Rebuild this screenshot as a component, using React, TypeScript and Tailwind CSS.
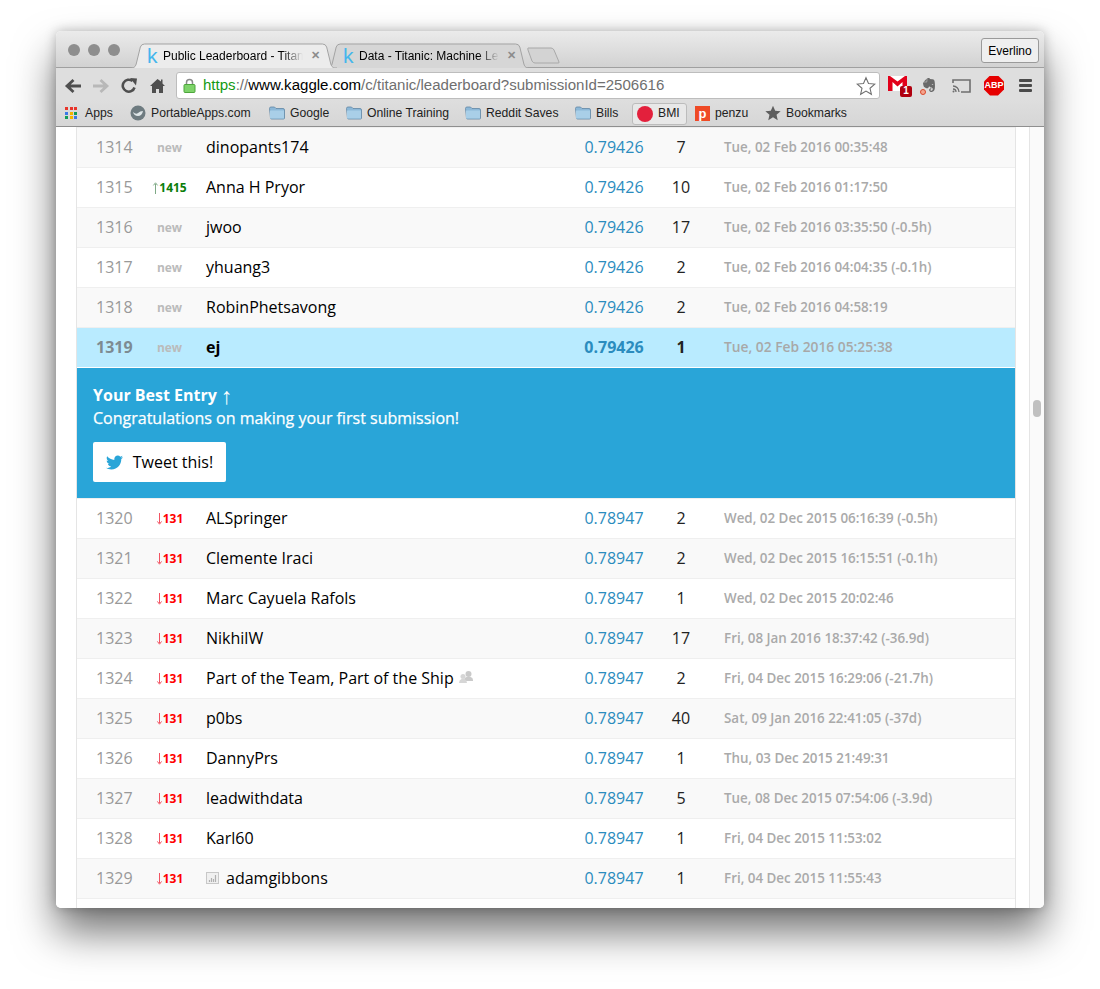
import React from 'react';
import { FaTwitter, FaEvernote } from 'react-icons/fa';

type Row = {
  rank: number;
  change: 'new' | 'up' | 'down';
  delta?: string;
  name: string;
  score: string;
  entries: number;
  date: string;
  team?: boolean;
  chart?: boolean;
};

const topRows: Row[] = [
  { rank: 1314, change: 'new', name: 'dinopants174', score: '0.79426', entries: 7, date: 'Tue, 02 Feb 2016 00:35:48' },
  { rank: 1315, change: 'up', delta: '1415', name: 'Anna H Pryor', score: '0.79426', entries: 10, date: 'Tue, 02 Feb 2016 01:17:50' },
  { rank: 1316, change: 'new', name: 'jwoo', score: '0.79426', entries: 17, date: 'Tue, 02 Feb 2016 03:35:50 (-0.5h)' },
  { rank: 1317, change: 'new', name: 'yhuang3', score: '0.79426', entries: 2, date: 'Tue, 02 Feb 2016 04:04:35 (-0.1h)' },
  { rank: 1318, change: 'new', name: 'RobinPhetsavong', score: '0.79426', entries: 2, date: 'Tue, 02 Feb 2016 04:58:19' },
];

const bottomRows: Row[] = [
  { rank: 1320, change: 'down', delta: '131', name: 'ALSpringer', score: '0.78947', entries: 2, date: 'Wed, 02 Dec 2015 06:16:39 (-0.5h)' },
  { rank: 1321, change: 'down', delta: '131', name: 'Clemente Iraci', score: '0.78947', entries: 2, date: 'Wed, 02 Dec 2015 16:15:51 (-0.1h)' },
  { rank: 1322, change: 'down', delta: '131', name: 'Marc Cayuela Rafols', score: '0.78947', entries: 1, date: 'Wed, 02 Dec 2015 20:02:46' },
  { rank: 1323, change: 'down', delta: '131', name: 'NikhilW', score: '0.78947', entries: 17, date: 'Fri, 08 Jan 2016 18:37:42 (-36.9d)' },
  { rank: 1324, change: 'down', delta: '131', name: 'Part of the Team, Part of the Ship', team: true, score: '0.78947', entries: 2, date: 'Fri, 04 Dec 2015 16:29:06 (-21.7h)' },
  { rank: 1325, change: 'down', delta: '131', name: 'p0bs', score: '0.78947', entries: 40, date: 'Sat, 09 Jan 2016 22:41:05 (-37d)' },
  { rank: 1326, change: 'down', delta: '131', name: 'DannyPrs', score: '0.78947', entries: 1, date: 'Thu, 03 Dec 2015 21:49:31' },
  { rank: 1327, change: 'down', delta: '131', name: 'leadwithdata', score: '0.78947', entries: 5, date: 'Tue, 08 Dec 2015 07:54:06 (-3.9d)' },
  { rank: 1328, change: 'down', delta: '131', name: 'Karl60', score: '0.78947', entries: 1, date: 'Fri, 04 Dec 2015 11:53:02' },
  { rank: 1329, change: 'down', delta: '131', name: 'adamgibbons', chart: true, score: '0.78947', entries: 1, date: 'Fri, 04 Dec 2015 11:55:43' },
];

const Change = ({ row }: { row: Row }) => {
  if (row.change === 'new') {
    return <div className="mt-[2px] pl-[1px] text-center text-[12px] font-bold text-[#bbbbbb]">new</div>;
  }
  const up = row.change === 'up';
  return (
    <div className={`mt-[2px] flex items-center justify-center whitespace-nowrap pl-[1px] text-[12px] font-bold ${up ? 'text-[#0a7d0a]' : 'text-[#ff0000]'}`}>
      <svg width="7" height="12" viewBox="0 0 7 12" className="mt-[1px]" fill="none" stroke={up ? '#6f9f78' : '#f04050'} strokeWidth="0.9">
        {up ? <path d="M3.5 12V2M1.4 3.4 3.5 .8l2.1 2.6" /> : <path d="M3.5 0v10M1.4 8.4l2.1 2.8 2.1-2.8" />}
      </svg>
      {row.delta}
    </div>
  );
};

const ChartIcon = () => (
  <svg width="13" height="12" viewBox="0 0 13 12" className="mr-[7px] shrink-0" fill="none">
    <rect x="0.5" y="0.5" width="12" height="11" fill="#f0f0f0" stroke="#c8c8c8" />
    <path d="M3.500 10V8M5.500 10V6M7.500 10V7M9.500 10V3" stroke="#b0b0b0" strokeWidth="1.200" />
  </svg>
);

const TeamIcon = () => (
  <svg width="14" height="13" viewBox="0 0 14 13" className="ml-[5px] -mt-[1px]" fill="#cacaca">
    <circle cx="9.500" cy="3" r="3" />
    <path d="M5 9q0-2.500 2.500-3h4q2.500.5 2.500 3v1H5z" />
    <circle cx="4" cy="5.500" r="2.500" fill="#d6d6d6" />
    <path d="M0 12q0-3 2.500-4h3Q8 9 8 12z" fill="#d6d6d6" />
  </svg>
);

const LeaderRow = ({ row, highlight, striped }: { row: Row; highlight?: boolean; striped?: boolean }) => (
  <div
    className={`grid h-10 grid-cols-[72px_40px_380px_90px_44px_1fr] items-center border-t border-[#efefef] pb-[2px] ${
      highlight ? 'bg-[#b9ebff]' : striped ? 'bg-[#f9f9f9]' : 'bg-white'
    }`}
  >
    <div className={`pl-[19px] text-[16px] ${highlight ? 'font-bold text-[#7d8b92]' : 'text-[#999999]'}`}>{row.rank}</div>
    <Change row={row} />
    <div className={`flex items-center pl-[17px] text-[16px] text-black ${highlight ? 'font-bold' : ''}`}>
      {row.chart && <ChartIcon />}
      {row.name}
      {row.team && <TeamIcon />}
    </div>
    <div className={`text-center text-[16px] text-[#2b8cbe] ${highlight ? 'font-bold' : ''}`}>{row.score}</div>
    <div className={`text-center text-[16px] text-[#222222] ${highlight ? 'font-bold' : ''}`}>{row.entries}</div>
    <div className={`mt-[1px] whitespace-nowrap pl-[21px] font-semibold ${highlight ? 'text-[13.8px] font-bold text-[#a8a8a8]' : 'text-[13.4px] text-[#aaaaaa]'}`}>{row.date}</div>
  </div>
);

const Folder = () => (
  <svg width="16" height="14" viewBox="0 0 16 14" className="shrink-0">
    <path d="M.5 2.500q0-1.500 1.500-1.500h3.500l1.500 1.500h7q1.500 0 1.500 1.500v8q0 1-1 1h-12q-1 0-1-1z" fill="#8cb8d8" stroke="#5f87a5" strokeWidth="0.8" />
    <path d="M1 4.500h14v7.500q0 .6-.6.6H1.600q-.6 0-.6-.6z" fill="#a9cfe8" />
  </svg>
);

const Bookmark = ({ icon, label, className }: { icon: React.ReactNode; label: string; className: string }) => (
  <div className={`flex items-center gap-[5px] whitespace-nowrap ${className}`}>
    {icon}
    <span>{label}</span>
  </div>
);

const AppsIcon = () => {
  const colors = ['#e8352b', '#e8352b', '#e8352b', '#3b78e7', '#f4b400', '#0f9d58', '#0f9d58', '#f4b400', '#3b78e7'];
  return (
    <div className="grid grid-cols-3 gap-[1.5px]">
      {colors.map((c, i) => (
        <span key={i} className="h-[3px] w-[3px]" style={{ backgroundColor: c }} />
      ))}
    </div>
  );
};

const Tab = ({ title, active, className }: { title: string; active?: boolean; className: string }) => (
  <div className={`relative flex h-[25px] items-center ${className}`}>
    <svg className="absolute inset-0 h-full w-full" viewBox="0 0 200 25" preserveAspectRatio="none">
      <path
        d="M0 25c4 0 5-1 6-4L10 4q1-3 4-3h172q3 0 4 3l4 17c1 3 2 4 6 4"
        fill={active ? '#ececec' : '#d6d6d6'}
        stroke="#a3a3a3"
        strokeWidth="1"
        vectorEffect="non-scaling-stroke"
      />
    </svg>
    <span className="relative ml-[17px] w-[16px] font-['Liberation_Sans',sans-serif] text-[21px] leading-none text-[#45b6ec]">k</span>
    <span className="relative h-[16px] w-[140px] overflow-hidden whitespace-nowrap text-[12px] leading-[16px] text-black [mask-image:linear-gradient(to_right,black_85%,transparent)]">{title}</span>
    <span className="relative ml-[8px] text-[11px] font-bold leading-none text-[#8c8c8c]">✕</span>
  </div>
);

export default function App() {
  return (
    <div className="h-[989px] w-[1100px] overflow-hidden bg-white pl-[56px] pt-[31px] font-['Open_Sans',sans-serif]">
      <div className="flex h-[877px] w-[988px] flex-col overflow-hidden rounded-[5px] bg-white shadow-[0_24px_42px_rgba(0,0,0,0.55),0_0_12px_rgba(0,0,0,0.25)]">
        {/* browser chrome */}
        <div className="font-['Liberation_Sans',sans-serif]">
          <div className="flex h-[37px] items-end border-b border-[#a0a0a0] bg-gradient-to-b from-[#ebebeb] to-[#d2d2d2]">
            <div className="mb-[11px] ml-[12px] flex gap-[8px]">
              <span className="h-3 w-3 rounded-full bg-[#8e8e8e]" />
              <span className="h-3 w-3 rounded-full bg-[#8e8e8e]" />
              <span className="h-3 w-3 rounded-full bg-[#8e8e8e]" />
            </div>
            <div className="-mb-px ml-[10px] flex">
              <Tab title="Public Leaderboard - Titanic" active className="z-10 w-[207px]" />
              <Tab title="Data - Titanic: Machine Learning" className="-ml-[11px] w-[204px]" />
            </div>
            <svg width="33" height="17" viewBox="0 0 33 17" className="-ml-[3px] mb-[3px]">
              <path d="M1 1h23q2 0 3 2l5 12q.5 1-1 1H8q-2 0-3-2L1 3q-.5-2 0-2z" fill="#d3d3d3" stroke="#a8a8a8" />
            </svg>
            <div className="mb-[4px] ml-auto mr-[5px] flex h-[25px] w-[58px] items-center justify-center rounded-[3px] border border-[#9a9a9a] bg-[#efefef] text-[12px] text-black">
              Everlino
            </div>
          </div>

          <div className="flex h-[32px] items-center bg-[#dedede] pt-[3px]">
            <svg width="18" height="16" viewBox="0 0 18 16" className="ml-[8px]" fill="none" stroke="#4f4f4f" strokeWidth="2.8">
              <path d="M17 8H4M9.500 2 3 8l6.500 6" />
            </svg>
            <svg width="18" height="16" viewBox="0 0 18 16" className="ml-[10px]" fill="none" stroke="#b8b8b8" strokeWidth="2.8">
              <path d="M1 8h13M8.500 2 15 8l-6.500 6" />
            </svg>
            <svg width="16" height="16" viewBox="0 0 16 16" className="ml-[11px]" fill="none">
              <path d="M13.500 9.500A6 6 0 1 1 11.500 3" stroke="#4f4f4f" strokeWidth="2.600" />
              <path d="M9 0l7 .5-1 7z" fill="#4f4f4f" />
            </svg>
            <svg width="15" height="15" viewBox="0 0 15 15" className="ml-[13px]" fill="#4f4f4f">
              <path d="M7.500 1 0 8h2v7h4v-4h3v4h4V8h2l-2.500-2.400V1.500H11v2z" />
            </svg>
            <div className="ml-[11px] flex h-[27px] w-[704px] items-center rounded-[3px] border border-[#bdbdbd] bg-white pl-[6px] pr-[3px] text-[15.05px]">
              <svg width="13" height="15" viewBox="0 0 13 15" className="shrink-0">
                <path d="M3.500 7V4.500a3 3 0 0 1 6 0V7" fill="none" stroke="#8a8a8a" strokeWidth="1.500" />
                <rect x="1" y="6.500" width="11" height="8" rx="1" fill="#7ed36a" stroke="#4da53c" />
              </svg>
              <span className="ml-[7px] whitespace-nowrap text-[#6f6f6f]">
                <span className="text-[#139a13]">https</span>://<span className="text-black">www.kaggle.com</span>/c/titanic/leaderboard?submissionId=2506616
              </span>
              <svg width="20" height="20" viewBox="0 0 24 24" className="ml-auto" fill="#fff" stroke="#707070" strokeWidth="1.300">
                <path d="m12 2 3 7 7.500.7-5.700 5 1.700 7.300-6.500-3.900L5.500 22l1.700-7.300-5.700-5L9 9z" />
              </svg>
            </div>
            <div className="relative ml-[8px] h-[22px] w-[24px]">
              <svg width="19" height="15" viewBox="0 0 19 15" className="absolute left-0 top-[1px]">
                <rect width="19" height="15" fill="#e2001a" />
                <path d="M2 0h15L9.500 5.500z" fill="#fff" />
                <path d="M4.500 15V6l5 4.500 5-4.500v9z" fill="#fff" />
              </svg>
              <span className="absolute right-0 top-[11px] flex h-[11px] w-[12px] items-center justify-center rounded-[2px] bg-[#b0000f] text-[10px] font-bold leading-none text-white">1</span>
            </div>
            <div className="relative ml-[8px] h-[18px] w-[17px]">
              <FaEvernote className="absolute right-0 top-0 text-[16px] text-[#6a6a6a]" />
              <span className="absolute bottom-0 left-0 h-[6px] w-[6px] rounded-full border border-[#d9482b] bg-[#f4a58e]" />
            </div>
            <svg width="19" height="14" viewBox="0 0 19 14" className="ml-[15px]" fill="none" stroke="#6f6f6f" strokeWidth="1.300">
              <path d="M1 4V1h17v12H9" strokeWidth="1.600" />
              <path d="M1 7a6 6 0 0 1 6 6M1 10a3 3 0 0 1 3 3" />
              <circle cx="1.500" cy="12.500" r="1" fill="#6f6f6f" stroke="none" />
            </svg>
            <div className="ml-[13px] flex h-5 w-5 items-center justify-center bg-[#e60000] text-[9px] font-bold text-white [clip-path:polygon(30%_0,70%_0,100%_30%,100%_70%,70%_100%,30%_100%,0_70%,0_30%)]">
              ABP
            </div>
            <div className="ml-[15px] flex flex-col gap-[2px]">
              <span className="h-[3px] w-[13px] rounded-[1px] bg-[#4a4a4a]" />
              <span className="h-[3px] w-[13px] rounded-[1px] bg-[#4a4a4a]" />
              <span className="h-[3px] w-[13px] rounded-[1px] bg-[#4a4a4a]" />
            </div>
          </div>

          <div className="flex h-[27px] items-center border-b border-[#8f8f8f] bg-gradient-to-b from-[#dedede] to-[#d6d6d6] pl-[9px] pt-[1px] text-[12.2px] text-[#222222]">
            <Bookmark icon={<AppsIcon />} label="Apps" className="w-[65px] !gap-[8px]" />
            <Bookmark
              icon={
                <svg width="16" height="16" viewBox="0 0 16 16">
                  <circle cx="8" cy="8" r="7.500" fill="#6e7b80" />
                  <path d="M3 7q3 3 5 1t5-2q-1 5-5 5T3 7z" fill="#dfe6e8" />
                </svg>
              }
              label="PortableApps.com"
              className="w-[139px]"
            />
            <Bookmark icon={<Folder />} label="Google" className="w-[77px]" />
            <Bookmark icon={<Folder />} label="Online Training" className="w-[119px]" />
            <Bookmark icon={<Folder />} label="Reddit Saves" className="w-[110px]" />
            <Bookmark icon={<Folder />} label="Bills" className="w-[57px]" />
            <div className="flex h-[22px] w-[55px] items-center gap-[5px] rounded-[3px] border border-[#bcbcbc] bg-[#e8e8e8] pl-[4px]">
              <span className="h-4 w-4 rounded-full bg-[#e3203c]" />
              BMI
            </div>
            <Bookmark
              icon={
                <span className="flex h-[15px] w-[15px] items-center justify-center bg-[#ef4a26] text-[13px] font-bold leading-none text-white">p</span>
              }
              label="penzu"
              className="ml-[8px] w-[70px]"
            />
            <Bookmark
              icon={
                <svg width="16" height="16" viewBox="0 0 24 24" fill="#5e5e5e">
                  <path d="m12 1 3.300 7.500 8.200.8-6.200 5.500 1.800 8L12 18.500 4.900 22.800l1.800-8L.5 9.300l8.200-.8z" />
                </svg>
              }
              label="Bookmarks"
              className=""
            />
          </div>
        </div>

        {/* page */}
        <div className="flex min-h-0 flex-1">
          <div className="w-[20px] shrink-0 bg-white" />
          <div className="w-[940px] shrink-0 overflow-hidden border-x border-[#e5e5e5]">
            {topRows.map((row, i) => (
              <LeaderRow key={row.rank} row={row} striped={i % 2 === 0} />
            ))}
            <LeaderRow
              highlight
              row={{ rank: 1319, change: 'new', name: 'ej', score: '0.79426', entries: 1, date: 'Tue, 02 Feb 2016 05:25:38' }}
            />
            <div className="h-[131px] border-t border-white bg-[#29a5d8] px-[16px] pt-[16px] text-[16px] leading-[23px] text-white">
              <div className="flex h-[23px] items-center gap-[4px] font-bold">
                Your Best Entry <span className="text-[23px] font-normal leading-none">↑</span>
              </div>
              <div className="[-webkit-text-stroke:0.25px_white]">Congratulations on making your first submission!</div>
              <div className="mt-3 flex h-10 w-[133px] items-center justify-center gap-[10px] rounded-[2px] bg-white text-black">
                <FaTwitter className="text-[17px] text-[#29a5d8]" />
                Tweet this!
              </div>
            </div>
            {bottomRows.map((row, i) => (
              <LeaderRow key={row.rank} row={row} striped={i % 2 === 1} />
            ))}
            <div className="h-3 border-t border-[#efefef] bg-white" />
          </div>
          <div className="w-[13px] shrink-0 bg-white" />
          <div className="flex-1 border-l border-[#e5e5e5] bg-[#fafafa] pl-[3px] pt-[273px]">
            <div className="h-[17px] w-2 rounded bg-[#c0c0c0]" />
          </div>
        </div>
      </div>
    </div>
  );
}
